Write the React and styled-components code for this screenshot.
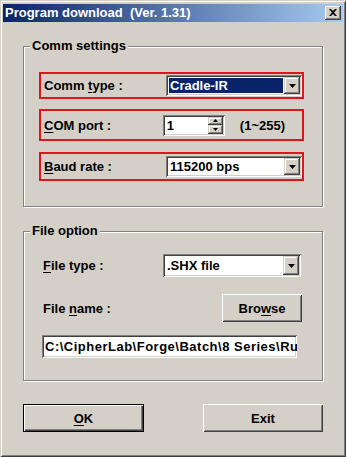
import React from 'react';
import styled, { createGlobalStyle } from 'styled-components';

const Global = createGlobalStyle`
  html, body { margin: 0; padding: 0; background: #D4D0C8; }
  body { font-family: "Liberation Sans", Arial, sans-serif; font-size: 13px; font-weight: bold; color: #000; }
`;

const face = '#D4D0C8';

const Window = styled.div`
  width: 346px;
  height: 457px;
  box-sizing: border-box;
  background: ${face};
  padding: 4px 3px 3px 3px;
  box-shadow: inset 1px 1px ${face}, inset -1px -1px #404040, inset 2px 2px #fff, inset -2px -2px #808080;
  display: flex;
  flex-direction: column;
`;

const TitleBar = styled.div`
  height: 18px;
  flex: none;
  display: flex;
  align-items: center;
  justify-content: space-between;
  background: linear-gradient(to right, #0A246A, #A6CAF0);
  padding: 0 2px 0 2px;
`;

const TitleText = styled.span`
  color: #fff;
  font-weight: bold;
  font-size: 13px;
  white-space: pre;
  line-height: 18px;
`;

const CaptionButton = styled.div`
  width: 16px;
  height: 14px;
  box-sizing: border-box;
  background: ${face};
  box-shadow: inset -1px -1px #404040, inset 1px 1px #fff, inset -2px -2px #808080, inset 2px 2px ${face};
  display: flex;
  align-items: center;
  justify-content: center;
  padding: 0 1px 1px 0;
`;

const Body = styled.div`
  flex: 1;
  display: flex;
  flex-direction: column;
  padding: 0 20px;
`;

const Group = styled.div`
  margin-top: 24px;
  width: 300px;
  box-sizing: border-box;
  border: 1px solid #808080;
  box-shadow: inset 1px 1px #fff, 1px 1px #fff;
  display: flex;
  flex-direction: column;
  padding-bottom: ${p => p.$pb}px;
`;

const Legend = styled.div`
  align-self: flex-start;
  margin: -9px 0 0 6px;
  padding: 0 2px;
  background: ${face};
  line-height: 15px;
  white-space: nowrap;
`;

const Highlight = styled.div`
  display: flex;
  align-items: center;
  justify-content: space-between;
  box-sizing: border-box;
  width: 265px;
  height: ${p => p.$h}px;
  margin: ${p => p.$mt}px 0 0 15px;
  padding: 0 ${p => p.$pr || 0}px 0 3px;
  border: 2px solid #E0141C;
`;

const Row = styled.div`
  display: flex;
  align-items: center;
  justify-content: space-between;
  margin: ${p => p.$mt}px 0 0 19px;
  width: ${p => p.$w}px;
  height: ${p => p.$h}px;
`;

const Label = styled.span`
  line-height: 15px;
  white-space: nowrap;
`;

const Key = styled.u`
  text-decoration: underline;
  text-underline-offset: 2px;
`;

const sunken = `
  box-shadow: inset 1px 1px #808080, inset -1px -1px #fff, inset 2px 2px #404040, inset -2px -2px ${face};
`;

const ComboBox = styled.div`
  width: ${p => p.$w}px;
  height: ${p => p.$h || 21}px;
  box-sizing: border-box;
  background: #fff;
  ${sunken}
  padding: 2px;
  display: flex;
  margin-right: ${p => p.$mr || 0}px;
`;

const ComboText = styled.div`
  flex: 1;
  display: flex;
  align-items: center;
  padding-left: 1px;
  margin: 1px;
  background: ${p => (p.$selected ? '#0A246A' : 'transparent')};
  color: ${p => (p.$selected ? '#fff' : '#000')};
  white-space: nowrap;
  overflow: hidden;
  line-height: 15px;
`;

const DropButton = styled.div`
  width: 16px;
  flex: none;
  background: ${face};
  box-shadow: inset -1px -1px #404040, inset 1px 1px ${face}, inset -2px -2px #808080, inset 2px 2px #fff;
  display: flex;
  align-items: center;
  justify-content: center;
`;

const Arrow = ({ up, size = 7 }) => {
  const h = Math.ceil(size / 2);
  return (
    <svg width={size} height={h} viewBox={`0 0 ${size} ${h}`} style={{ display: 'block' }}>
      {up ? (
        <polygon points={`${size / 2},0 ${size},${h} 0,${h}`} fill="#000" />
      ) : (
        <polygon points={`0,0 ${size},0 ${size / 2},${h}`} fill="#000" />
      )}
    </svg>
  );
};

const SpinWrap = styled.div`
  display: flex;
  align-items: center;
  gap: 15px;
`;

const SpinBox = styled.div`
  width: 62px;
  height: 21px;
  box-sizing: border-box;
  background: #fff;
  ${sunken}
  padding: 2px;
  display: flex;
`;

const SpinText = styled.div`
  flex: 1;
  padding-left: 2px;
  line-height: 17px;
`;

const SpinButtons = styled.div`
  width: 15px;
  display: flex;
  flex-direction: column;
`;

const SpinButton = styled.div`
  flex: 1;
  background: ${face};
  box-shadow: inset -1px -1px #404040, inset 1px 1px ${face}, inset -2px -2px #808080, inset 2px 2px #fff;
  display: flex;
  align-items: center;
  justify-content: center;
`;

const Range = styled.span`
  margin-right: 17px;
  line-height: 15px;
`;

const Button = styled.div`
  width: ${p => p.$w}px;
  height: ${p => p.$h}px;
  box-sizing: border-box;
  background: ${face};
  display: flex;
  align-items: center;
  justify-content: center;
  line-height: 15px;
  ${p =>
    p.$default
      ? `border: 1px solid #000; box-shadow: inset 1px 1px #fff, inset -1px -1px #404040, inset -2px -2px #808080;`
      : `box-shadow: inset 1px 1px #fff, inset -1px -1px #404040, inset 2px 2px ${face}, inset -2px -2px #808080;`}
`;

const PathField = styled.div`
  margin: 13px 0 0 18px;
  width: 255px;
  height: 23px;
  box-sizing: border-box;
  background: #fff;
  ${sunken}
  padding: 2px 2px 2px 3px;
  overflow: hidden;
  white-space: nowrap;
  line-height: 19px;
  letter-spacing: 0.5px;
`;

const ButtonBar = styled.div`
  margin-top: 23px;
  display: flex;
  justify-content: space-between;
  width: 300px;
`;

const CloseGlyph = () => (
  <svg width="8" height="7" viewBox="0 0 8 7" style={{ display: 'block' }}>
    <path d="M0 0h2l2 2 2-2h2L5 3.5 8 7H6L4 5 2 7H0l3-3.5z" fill="#000" />
  </svg>
);

export default function App() {
  return (
    <>
      <Global />
      <Window>
        <TitleBar>
          <TitleText>Program download  (Ver. 1.31)</TitleText>
          <CaptionButton>
            <CloseGlyph />
          </CaptionButton>
        </TitleBar>
        <Body>
          <Group $pb={25}>
            <Legend>Comm settings</Legend>
            <Highlight $h={27} $mt={19}>
              <Label>
                Comm <Key>t</Key>ype :
              </Label>
              <ComboBox $w={136}>
                <ComboText $selected>Cradle-IR</ComboText>
                <DropButton>
                  <Arrow />
                </DropButton>
              </ComboBox>
            </Highlight>
            <Highlight $h={32} $mt={10}>
              <Label>
                <Key>C</Key>OM port :
              </Label>
              <SpinWrap>
                <SpinBox>
                  <SpinText>1</SpinText>
                  <SpinButtons>
                    <SpinButton>
                      <Arrow up size={5} />
                    </SpinButton>
                    <SpinButton>
                      <Arrow size={5} />
                    </SpinButton>
                  </SpinButtons>
                </SpinBox>
                <Range>(1~255)</Range>
              </SpinWrap>
            </Highlight>
            <Highlight $h={29} $mt={11}>
              <Label>
                <Key>B</Key>aud rate :
              </Label>
              <ComboBox $w={136}>
                <ComboText>115200 bps</ComboText>
                <DropButton>
                  <Arrow />
                </DropButton>
              </ComboBox>
            </Highlight>
          </Group>
          <Group $pb={22}>
            <Legend>File option</Legend>
            <Row $mt={16} $w={258} $h={23}>
              <Label>
                <Key>F</Key>ile type :
              </Label>
              <ComboBox $w={138} $h={23}>
                <ComboText>.SHX file</ComboText>
                <DropButton>
                  <Arrow />
                </DropButton>
              </ComboBox>
            </Row>
            <Row $mt={17} $w={259} $h={28}>
              <Label>
                File <Key>n</Key>ame :
              </Label>
              <Button $w={80} $h={28}>
                <span>
                  Bro<Key>w</Key>se
                </span>
              </Button>
            </Row>
            <PathField>C:\CipherLab\Forge\Batch\8 Series\Run</PathField>
          </Group>
          <ButtonBar>
            <Button $w={121} $h={28} $default>
              <span>
                <Key>O</Key>K
              </span>
            </Button>
            <Button $w={120} $h={28}>
              Exit
            </Button>
          </ButtonBar>
        </Body>
      </Window>
    </>
  );
}
